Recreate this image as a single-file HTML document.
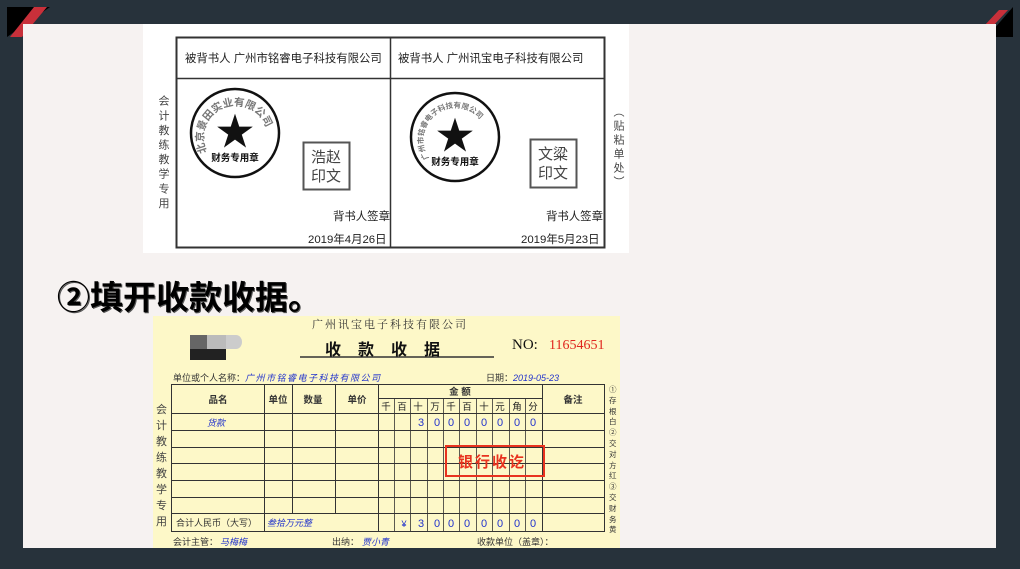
<!DOCTYPE html>
<html><head><meta charset="utf-8"><style>
*{margin:0;padding:0}
body{width:1020px;height:569px;background:#27323b;position:relative;overflow:hidden;font-family:"Liberation Sans","Noto Sans CJK SC",sans-serif}
.a{position:absolute}
.slide{left:23px;top:24px;width:973px;height:524px;background:#f6f2f1}
.t{position:absolute;white-space:nowrap;color:#222}
.v{writing-mode:vertical-rl;white-space:nowrap;position:absolute}
</style></head><body>
<svg class="a" style="left:0;top:0" width="1020" height="60">
<polygon points="7,7 50,7 7,37" fill="#000"/>
<polygon points="34,7 47,7 22,37 10,37" fill="#c8303a"/>
<polygon points="1013,7 1013,37 987,37" fill="#000"/>
<polygon points="999,10 1008,10 993,26 984,26" fill="#c8303a"/>
</svg>
<div class="a slide"></div>

<svg class="a" style="left:143px;top:24px" width="486" height="229">
<rect width="486" height="229" fill="#fff"/>
<rect x="33.5" y="13.5" width="428" height="210" fill="none" stroke="#333" stroke-width="2"/>
<line x1="33" y1="54.5" x2="461" y2="54.5" stroke="#333" stroke-width="1.5"/>
<line x1="247.5" y1="13" x2="247.5" y2="223" stroke="#333" stroke-width="1.5"/>
<g font-family="Liberation Sans,Noto Sans CJK SC,sans-serif" fill="#222" font-size="11.4">
<text x="42" y="38">被背书人  广州市铭睿电子科技有限公司</text>
<text x="255" y="38">被背书人  广州讯宝电子科技有限公司</text>
<text x="190" y="196">背书人签章</text>
<text x="403" y="196">背书人签章</text>
<text x="165" y="219">2019年4月26日</text>
<text x="378" y="219">2019年5月23日</text>
</g>
<circle cx="92" cy="109" r="44" fill="none" stroke="#111" stroke-width="2.5"/>
<circle cx="312" cy="113" r="44" fill="none" stroke="#111" stroke-width="2.5"/>
<defs>
<path id="c1" d="M64,128 A32,32 0 1,1 124,120"/>
<path id="c2" d="M286,134 A32,32 0 1,1 343,125"/>
</defs>
<text font-size="10.5" fill="#777" font-weight="bold" font-family="Noto Sans CJK SC,sans-serif"><textPath href="#c1">北京景田实业有限公司</textPath></text>
<text font-size="7.5" fill="#777" font-weight="bold" font-family="Noto Sans CJK SC,sans-serif"><textPath href="#c2">广州市铭睿电子科技有限公司</textPath></text>
<text x="92" y="121" font-size="38" text-anchor="middle" fill="#111">★</text>
<text x="312" y="125" font-size="38" text-anchor="middle" fill="#111">★</text>
<text x="92" y="137" font-size="9.5" font-weight="bold" text-anchor="middle" fill="#111" font-family="Noto Sans CJK SC,sans-serif">财务专用章</text>
<text x="312" y="141" font-size="9.5" font-weight="bold" text-anchor="middle" fill="#111" font-family="Noto Sans CJK SC,sans-serif">财务专用章</text>
<rect x="160.5" y="118.5" width="46" height="47" fill="none" stroke="#555" stroke-width="2"/>
<rect x="387.5" y="115.5" width="46" height="48" fill="none" stroke="#555" stroke-width="2"/>
<g font-size="15" fill="#444" text-anchor="middle" font-family="Noto Sans CJK SC,sans-serif">
<text x="183" y="138">浩赵</text><text x="183" y="157">印文</text>
<text x="410" y="135">文粱</text><text x="410" y="154">印文</text>
</g>
</svg>
<div class="v" style="left:156px;top:95px;font-size:11px;line-height:14px;letter-spacing:3.6px;color:#444">会计教练教学专用</div>
<div class="v" style="left:611px;top:106px;font-size:11px;line-height:14px;letter-spacing:3px;color:#444">（贴粘单处）</div>

<div class="t" style="left:57px;top:279px;font-size:33px;line-height:38px;font-weight:bold;color:#000;text-shadow:1px 1px 0 #555">②填开收款收据。</div>

<svg class="a" style="left:153px;top:316px" width="467" height="232">
<rect width="467" height="232" fill="#fdf8c8"/>
<g transform="translate(-153,-316)">
<rect x="190" y="335" width="17" height="14" fill="#666"/><rect x="207" y="335" width="19" height="14" fill="#bbb"/><path d="M226,335 h10 a6,7 0 0 1 0,14 h-10z" fill="#ccc"/>
<rect x="190" y="349" width="36" height="11" fill="#222"/>
<g stroke="#333" stroke-width="1" fill="none">
<rect x="171.5" y="384.5" width="433" height="147"/>
<line x1="171" y1="413.5" x2="605" y2="413.5"/>
<line x1="171" y1="430.5" x2="605" y2="430.5"/>
<line x1="171" y1="447.5" x2="605" y2="447.5"/>
<line x1="171" y1="463.5" x2="605" y2="463.5"/>
<line x1="171" y1="480.5" x2="605" y2="480.5"/>
<line x1="171" y1="497.5" x2="605" y2="497.5"/>
<line x1="171" y1="513.5" x2="605" y2="513.5"/>
<line x1="378" y1="398.5" x2="542" y2="398.5"/>
<line x1="264.5" y1="384" x2="264.5" y2="531"/>
<line x1="292.5" y1="384" x2="292.5" y2="513"/>
<line x1="335.5" y1="384" x2="335.5" y2="513"/>
<line x1="378.5" y1="384" x2="378.5" y2="531"/>
<line x1="542.5" y1="384" x2="542.5" y2="531"/>
<g stroke-width="0.8"><line x1="394.5" y1="398" x2="394.5" y2="531"/><line x1="410.5" y1="398" x2="410.5" y2="531"/><line x1="427.5" y1="398" x2="427.5" y2="531"/><line x1="443.5" y1="398" x2="443.5" y2="531"/><line x1="459.5" y1="398" x2="459.5" y2="531"/><line x1="476.5" y1="398" x2="476.5" y2="531"/><line x1="492.5" y1="398" x2="492.5" y2="531"/><line x1="509.5" y1="398" x2="509.5" y2="531"/><line x1="525.5" y1="398" x2="525.5" y2="531"/></g>
<line x1="300" y1="357" x2="494" y2="357" stroke-width="1.5"/>
</g>
<g font-family="Liberation Sans,Noto Sans CJK SC,sans-serif" fill="#333">
<text x="312" y="328" font-size="11" letter-spacing="2" font-family="Noto Serif CJK SC,serif">广州讯宝电子科技有限公司</text>
<text x="325" y="355" font-size="16" font-weight="bold" letter-spacing="17" fill="#111">收款收据</text>
<text x="512" y="349" font-size="15" font-family="Liberation Serif,serif" fill="#111">NO:</text>
<text x="549" y="349" font-size="14" font-family="Liberation Serif,serif" fill="#e0261e">11654651</text>
<text x="173" y="381" font-size="9">单位或个人名称：</text>
<text x="245" y="381" font-size="9" fill="#2233cc" font-style="italic" letter-spacing="1.5">广州市铭睿电子科技有限公司</text>
<text x="486" y="381" font-size="9">日期：</text>
<text x="513" y="381" font-size="9" fill="#2233cc" font-style="italic">2019-05-23</text>
<g font-size="9.5" font-weight="bold" text-anchor="middle">
<text x="218" y="403">品名</text><text x="278" y="403">单位</text><text x="313" y="403">数量</text><text x="357" y="403">单价</text><text x="460" y="395">金 额</text><text x="573" y="403">备注</text>
</g>
<g font-size="9.5" text-anchor="middle" fill="#222">
<text x="386" y="410">千</text><text x="402" y="410">百</text><text x="418" y="410">十</text><text x="435" y="410">万</text><text x="451" y="410">千</text><text x="467" y="410">百</text><text x="484" y="410">十</text><text x="500" y="410">元</text><text x="517" y="410">角</text><text x="533" y="410">分</text>
</g>
<g font-size="11" text-anchor="middle" fill="#2233cc">
<text x="421" y="426">3</text><text x="437" y="426">0</text><text x="451" y="426">0</text><text x="467" y="426">0</text><text x="484" y="426">0</text><text x="500" y="426">0</text><text x="517" y="426">0</text><text x="533" y="426">0</text>
<text x="404" y="527" font-size="9">¥</text>
<text x="421" y="527">3</text><text x="437" y="527">0</text><text x="451" y="527">0</text><text x="467" y="527">0</text><text x="484" y="527">0</text><text x="500" y="527">0</text><text x="517" y="527">0</text><text x="533" y="527">0</text>
</g>
<text x="207" y="426" font-size="9" fill="#2233cc" font-style="italic">货款</text>
<text x="176" y="526" font-size="9">合计人民币（大写）</text>
<text x="267" y="526" font-size="9" fill="#2233cc" font-style="italic">叁拾万元整</text>
<rect x="446" y="446" width="98" height="30" fill="none" stroke="#e8331f" stroke-width="2"/>
<text x="458" y="467" font-size="15" font-weight="bold" fill="#e8331f" letter-spacing="2">银行收讫</text>
<text x="173" y="545" font-size="9">会计主管：</text><text x="220" y="545" font-size="9" fill="#2233cc" font-style="italic">马梅梅</text>
<text x="332" y="545" font-size="9">出纳：</text><text x="362" y="545" font-size="9" fill="#2233cc" font-style="italic">贾小青</text>
<text x="477" y="545" font-size="9">收款单位（盖章）：</text>
</g>
</g>
</svg>
<div class="t" style="left:156px;top:402px;font-size:11px;line-height:16px;width:12px;white-space:normal;color:#444">会计教练教学专用</div>
<div class="t" style="left:609px;top:385px;font-size:7.5px;line-height:10.8px;width:8px;white-space:normal;color:#333">①存根白②交对方红③交财务黄</div>
</body></html>
